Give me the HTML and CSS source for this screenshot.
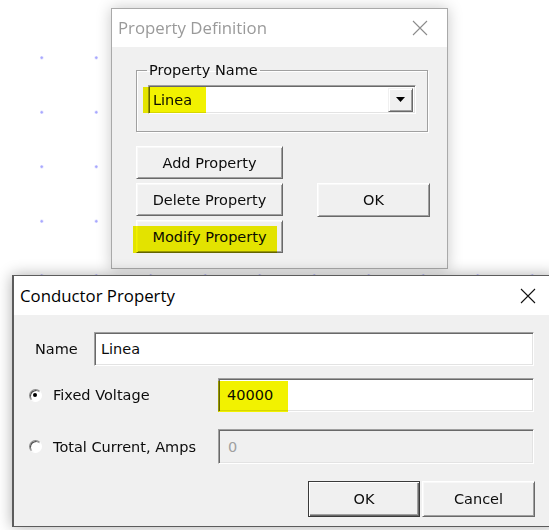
FILE: index.html
```html
<!DOCTYPE html>
<html lang="en">
<head>
<meta charset="utf-8">
<title>Property Definition</title>
<link rel="stylesheet" href="styles.css">
</head>
<body class="desk">

<section class="window window--inactive prop-def">
  <header class="titlebar">
    <span class="titlebar__text">Property Definition</span>
    <svg class="titlebar__close" width="16" height="16" viewBox="0 0 16 16" aria-hidden="true">
      <path d="M1 1 L15 15 M15 1 L1 15" />
    </svg>
  </header>
  <div class="window__body prop-def__body">
    <fieldset class="group">
      <legend class="group__legend">Property Name</legend>
      <div class="combo">
        <span class="combo__text">Linea</span>
        <span class="combo__btn">
          <svg width="9" height="5" viewBox="0 0 9 5" aria-hidden="true"><path d="M0 0 H9 L4.5 5 Z" /></svg>
        </span>
        <span class="marker marker--combo"></span>
      </div>
    </fieldset>
    <div class="prop-def__actions">
      <button class="btn btn--add" type="button">Add Property</button>
      <button class="btn btn--delete" type="button">Delete Property</button>
      <button class="btn btn--close" type="button">OK</button>
      <button class="btn btn--modify" type="button">Modify Property<span class="marker marker--modify"></span></button>
    </div>
  </div>
</section>

<section class="window window--active conductor">
  <header class="titlebar">
    <span class="titlebar__text">Conductor Property</span>
    <svg class="titlebar__close" width="16" height="16" viewBox="0 0 16 16" aria-hidden="true">
      <path d="M1 1 L15 15 M15 1 L1 15" />
    </svg>
  </header>
  <div class="window__body conductor__body">
    <div class="row row--name">
      <label class="row__label row__label--name">Name</label>
      <div class="field"><span class="field__text">Linea</span></div>
    </div>
    <div class="row row--choice row--voltage">
      <label class="choice">
        <span class="radio radio--on"></span>
        <span class="choice__text">Fixed Voltage</span>
      </label>
      <div class="field field--marked"><span class="field__text">40000</span><span class="marker marker--voltage"></span></div>
    </div>
    <div class="row row--choice row--current">
      <label class="choice">
        <span class="radio"></span>
        <span class="choice__text">Total Current, Amps</span>
      </label>
      <div class="field field--disabled"><span class="field__text">0</span></div>
    </div>
    <div class="row row--buttons">
      <button class="btn btn--default" type="button">OK</button>
      <button class="btn btn--cancel" type="button">Cancel</button>
    </div>
  </div>
</section>

</body>
</html>
```

FILE: styles.css
```css
html {
  background: #ffffff;
}

/* drawing area with its blue snap-grid dots; the strip right of the
   property window is blank */
.desk {
  margin: 0;
  width: 549px;
  height: 530px;
  padding-top: 30px;
  box-sizing: border-box;
  position: relative;
  overflow: hidden;
  background-color: transparent;
  background-image:
    linear-gradient(#ffffff, #ffffff),
    radial-gradient(circle, #a4a4ff 0, #a4a4ff 1px, rgba(164, 164, 255, 0) 1.6px);
  background-repeat: no-repeat, repeat;
  background-size: 100px 238px, 54.5px 54.5px;
  background-position: right 0 top 0, 14.5px 0.5px;
  background-origin: content-box;
  background-clip: content-box;
  font-family: "DejaVu Sans", Verdana, sans-serif;
  font-size: 14.5px;
  color: #0c0c0c;
}

/* ---------- window frame ---------- */
.window {
  position: absolute;
  box-sizing: border-box;
  background: #f0f0f0;
  display: flex;
  flex-direction: column;
}

.window--inactive {
  border: 1px solid #a9a9a9;
  box-shadow: 0 0 14px rgba(0, 0, 0, 0.22);
}

.window--active {
  border: 1px solid #5c5c5c;
  border-left-width: 2px;
  box-shadow: 0 0 14px rgba(0, 0, 0, 0.32);
}

.titlebar {
  display: flex;
  align-items: center;
  justify-content: space-between;
  background: #ffffff;
  padding: 0 19px 0 6px;
  flex: none;
}

.titlebar__text {
  font-family: "Open Sans", "Noto Sans", sans-serif;
  font-size: 16.8px;
  line-height: 20px;
}

.titlebar__close path {
  stroke-width: 1.1;
  fill: none;
}

.window--inactive .titlebar__text { color: #9a9a9a; }
.window--inactive .titlebar__close path { stroke: #8c8c8c; }
.window--active .titlebar__text { color: #000; }
.window--active .titlebar__close path { stroke: #111; }

.window__body {
  flex: 1;
}

/* ---------- Property Definition ---------- */
.prop-def {
  left: 111px;
  top: 8px;
  width: 337px;
  height: 261px;
}

.prop-def .titlebar {
  height: 38px;
}

.prop-def__body {
  padding: 14px 0 0 24px;
}

.group {
  margin: 0;
  width: 292px;
  box-sizing: border-box;
  padding: 0 11px 17px 11px;
  border: 1px solid #a0a0a0;
  box-shadow: inset 1px 1px #ffffff, 1px 1px #ffffff;
  min-width: 0;
}

.group__legend {
  padding: 0 2px;
  margin-left: -1px;
  line-height: 18px;
}

.combo {
  position: relative;
  margin-top: 6px;
  width: 268px;
  height: 29px;
  box-sizing: border-box;
  background: #ffffff;
  border: 1px solid;
  border-color: #a0a0a0 #ffffff #ffffff #a0a0a0;
  box-shadow: inset 1px 1px #696969, inset -1px -1px #e3e3e3;
  display: flex;
  align-items: center;
  justify-content: space-between;
  padding: 0 2px 0 4px;
}

.combo__btn {
  width: 25px;
  height: 24px;
  box-sizing: border-box;
  background: #f0f0f0;
  border: 1px solid;
  border-color: #f0f0f0 #696969 #696969 #f0f0f0;
  box-shadow: inset 1px 1px #ffffff, inset -1px -1px #a0a0a0;
  display: flex;
  align-items: center;
  justify-content: center;
}

.combo__btn svg path {
  fill: #000;
}

.prop-def__actions {
  margin-top: 14px;
  display: grid;
  grid-template-columns: 147px 34px 113px;
  grid-template-rows: 33px 33px 33px;
  row-gap: 4px;
}

.btn--add { grid-column: 1; grid-row: 1; }
.btn--delete { grid-column: 1; grid-row: 2; }
.btn--close { grid-column: 3; grid-row: 2; height: 34px; margin-top: -1px; }
.btn--modify { grid-column: 1; grid-row: 3; position: relative; }

/* ---------- buttons ---------- */
.btn {
  font-family: inherit;
  font-size: inherit;
  color: #0c0c0c;
  background: #f0f0f0;
  box-sizing: border-box;
  margin: 0;
  padding: 0;
  border: 1px solid;
  border-color: #ffffff #696969 #696969 #ffffff;
  box-shadow: inset 1px 1px #f8f8f8, inset -1px -1px #a0a0a0;
  border-radius: 0;
}

/* ---------- highlighter strokes ---------- */
.marker {
  position: absolute;
  background: #f2f200;
  mix-blend-mode: multiply;
  pointer-events: none;
}

.marker--combo {
  left: -6px;
  top: 1px;
  width: 63px;
  height: 26px;
}

.marker--modify {
  left: -4px;
  top: 5px;
  width: 144px;
  height: 27px;
}

.marker--voltage {
  left: -1px;
  top: 2px;
  width: 70px;
  height: 31px;
}

/* ---------- Conductor Property ---------- */
.conductor {
  left: 12px;
  top: 275px;
  width: 544px;
}

.conductor .titlebar {
  height: 39px;
}

.conductor__body {
  padding: 17px 21px 9px 14px;
  display: flex;
  flex-direction: column;
}

.row {
  display: flex;
  align-items: center;
}

.row__label--name {
  width: 59px;
  padding-left: 7px;
  flex: none;
}

.row--voltage { margin-top: 12px; }
.row--current { margin-top: 17px; }

.field {
  position: relative;
  flex: 1;
  height: 34px;
  box-sizing: border-box;
  background: #ffffff;
  border: 1px solid;
  border-color: #a0a0a0 #ffffff #ffffff #a0a0a0;
  box-shadow: inset 1px 1px #696969, inset -1px -1px #e3e3e3;
  display: flex;
  align-items: center;
  padding-left: 6px;
}

.field--disabled {
  height: 35px;
  background: #f0f0f0;
  color: #a0a0a0;
  padding-left: 9px;
}

.field--marked {
  padding-left: 8px;
}

.choice {
  width: 190px;
  flex: none;
  display: flex;
  align-items: center;
}

.radio {
  width: 13px;
  height: 13px;
  box-sizing: border-box;
  border-radius: 50%;
  border: 1px solid;
  border-color: #8a8a8a #ffffff #ffffff #8a8a8a;
  background: #ffffff;
  box-shadow: inset 1px 1px #505050;
  margin: 0 11px 0 1px;
  position: relative;
  flex: none;
}

.radio--on::after {
  content: "";
  position: absolute;
  left: 3px;
  top: 3px;
  width: 4px;
  height: 4px;
  border-radius: 50%;
  background: #000;
}

.row--buttons {
  margin-top: 17px;
  justify-content: flex-end;
  gap: 2px;
  padding-right: 0;
}

.row--buttons .btn {
  height: 36px;
}

.btn--default {
  width: 112px;
  border: 1px solid #3a3a3a;
  box-shadow: inset 1px 1px #ffffff, inset -1px -1px #696969, inset -2px -2px #a0a0a0;
}

.btn--cancel {
  width: 113px;
  margin-right: -1px;
}
```
